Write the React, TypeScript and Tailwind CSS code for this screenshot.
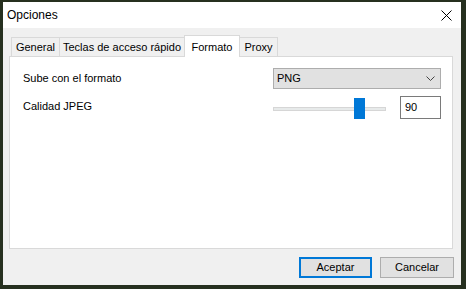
const TABS = [
  { label: 'General', w: 'w-[49px]' },
  { label: 'Teclas de acceso rápido', w: 'w-[126px]' },
  { label: 'Formato', w: 'w-[56px]', active: true },
  { label: 'Proxy', w: 'w-[39px]' },
]

export default function App() {
  return (
    <div
      className="w-[466px] h-[289px] overflow-hidden bg-[#26301f] pt-[2px] pl-[3px] text-[11px] text-black whitespace-nowrap"
      style={{ fontFamily: '"Liberation Sans", "Segoe UI", sans-serif' }}
    >
      <div className="flex h-[283px] w-[458px] flex-col bg-[#f0f0f0]">
        {/* title bar */}
        <div className="flex h-[26px] items-center justify-between bg-white pl-[4px] pr-[9px]">
          <span className="text-[12px]">Opciones</span>
          <svg width="11" height="11" viewBox="0 0 11 11" className="text-black">
            <path d="M0.5 0.5 L10.5 10.5 M10.5 0.5 L0.5 10.5" stroke="currentColor" strokeWidth="1" />
          </svg>
        </div>

        <div className="flex flex-1 flex-col px-[6px] pt-[7px]">
          {/* tabs */}
          <div className="relative z-10 -mb-px flex h-[22px] items-end pl-[2px]">
            {TABS.map((t) =>
              t.active ? (
                <div
                  key={t.label}
                  className={`${t.w} -ml-px flex h-[22px] items-start justify-center border-x border-t border-[#d9d9d9] bg-white pt-[3px]`}
                >
                  {t.label}
                </div>
              ) : (
                <div
                  key={t.label}
                  className={`${t.w} -ml-px first:ml-0 flex h-[20px] items-center justify-center border border-[#d9d9d9] bg-[#f0f0f0] pt-[1px]`}
                >
                  {t.label}
                </div>
              ),
            )}
          </div>

          {/* panel */}
          <div className="flex h-[193px] w-[444px] flex-col gap-[7px] border border-[#d9d9d9] bg-white pl-[13px] pr-[11px] pt-[11px]">
            <div className="flex h-[21px] items-center">
              <span className="flex-1">Sube con el formato</span>
              <div className="flex h-[21px] w-[168px] items-center justify-between border border-[#adadad] bg-[#e1e1e1] pl-[3px] pr-[5px]">
                <span>PNG</span>
                <svg width="9" height="5" viewBox="0 0 9 5">
                  <path d="M0.5 0.5 L4.5 4.5 L8.5 0.5" fill="none" stroke="#444" strokeWidth="1" />
                </svg>
              </div>
            </div>
            <div className="flex h-[23px] items-start">
              <span className="flex-1 leading-[20px]">Calidad JPEG</span>
              <div className="flex w-[168px] items-center">
                <div className="relative h-[23px] w-[113px]">
                  <div className="absolute left-0 right-0 top-[11px] h-[4px] border border-[#d6d6d6] bg-[#e7eaea]" />
                  <div className="absolute left-[81px] top-[2px] h-[21px] w-[11px] bg-[#0078d7]" />
                </div>
                <div className="ml-auto flex h-[23px] w-[41px] items-center border border-[#7a7a7a] bg-white pl-[4px]">
                  90
                </div>
              </div>
            </div>
          </div>

          {/* buttons */}
          <div className="flex justify-end gap-[8px] pr-[1px] pt-[8px]">
            <button className="h-[21px] w-[73px] border-2 border-[#0078d7] bg-[#e1e1e1] text-[11px]">Aceptar</button>
            <button className="h-[21px] w-[74px] border border-[#adadad] bg-[#e1e1e1] text-[11px]">Cancelar</button>
          </div>
        </div>
      </div>
    </div>
  )
}
